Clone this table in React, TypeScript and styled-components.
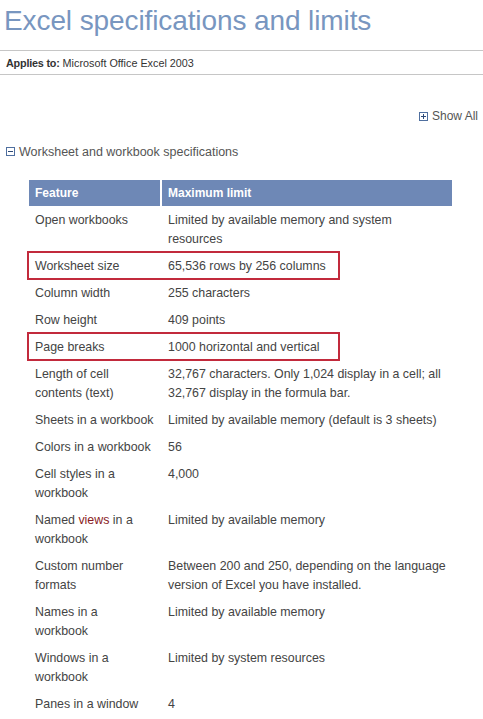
import React from 'react'
import styled, { createGlobalStyle } from 'styled-components'

const GlobalStyle = createGlobalStyle`
  html, body {
    margin: 0;
    padding: 0;
    background: #ffffff;
  }
  body {
    font-family: 'Liberation Sans', Arial, sans-serif;
    color: #444444;
  }
`

const TermLink = styled.span`
  color: #8a1c24;
`

interface Spec {
  feature: React.ReactNode
  limit: string
  highlight?: boolean
}

// line breaks follow the wrapping of the original page
const SPECS: Spec[] = [
  { feature: 'Open workbooks', limit: 'Limited by available memory and system\nresources' },
  { feature: 'Worksheet size', limit: '65,536 rows by 256 columns', highlight: true },
  { feature: 'Column width', limit: '255 characters' },
  { feature: 'Row height', limit: '409 points' },
  { feature: 'Page breaks', limit: '1000 horizontal and vertical', highlight: true },
  {
    feature: 'Length of cell\ncontents (text)',
    limit: '32,767 characters. Only 1,024 display in a cell; all\n32,767 display in the formula bar.',
  },
  { feature: 'Sheets in a workbook', limit: 'Limited by available memory (default is 3 sheets)' },
  { feature: 'Colors in a workbook', limit: '56' },
  { feature: 'Cell styles in a\nworkbook', limit: '4,000' },
  {
    feature: (
      <>
        Named <TermLink>views</TermLink> in a{'\n'}workbook
      </>
    ),
    limit: 'Limited by available memory',
  },
  {
    feature: 'Custom number\nformats',
    limit: 'Between 200 and 250, depending on the language\nversion of Excel you have installed.',
  },
  { feature: 'Names in a\nworkbook', limit: 'Limited by available memory' },
  { feature: 'Windows in a\nworkbook', limit: 'Limited by system resources' },
  { feature: 'Panes in a window', limit: '4' },
]

const Page = styled.div`
  width: 483px;
  padding-top: 4px;
`

const Title = styled.h1`
  margin: 0;
  padding-left: 4px;
  font-family: 'Liberation Sans', Arial, sans-serif;
  font-size: 28px;
  font-weight: normal;
  line-height: 34px;
  letter-spacing: -0.1px;
  color: #7896c0;
`

const AppliesBar = styled.div`
  margin-top: 12px;
  height: 23px;
  border-top: 1px solid #c6c6c6;
  border-bottom: 1px solid #c6c6c6;
  display: flex;
  align-items: center;
  padding-left: 6px;
  font-family: 'Liberation Sans', Tahoma, sans-serif;
  font-size: 10.8px;
  color: #333333;
`

const AppliesLabel = styled.b`
  margin-right: 3px;
  letter-spacing: -0.2px;
`

const ShowAllRow = styled.div`
  display: flex;
  justify-content: flex-end;
  margin-top: 34px;
  padding-right: 5px;
`

const Toggle = styled.span<{ $size?: number }>`
  display: inline-flex;
  align-items: center;
  gap: 4px;
  font-size: ${(p) => p.$size ?? 12}px;
  line-height: 14px;
  color: #555555;
`

const SectionHeading = styled.div`
  margin-top: 19px;
  padding-left: 6px;
`

const SpecTable = styled.div`
  margin: 20px 0 0 29px;
  width: 423px;
  font-size: 12.4px;
  color: #444444;
`

const HeaderRow = styled.div`
  display: grid;
  grid-template-columns: 131px 1fr;
  gap: 2px;
  height: 26px;
  font-size: 12px;
`

const HeaderCell = styled.div`
  background: #6e88b6;
  color: #ffffff;
  font-weight: bold;
  display: flex;
  align-items: center;
  padding-left: 6px;
`

const Row = styled.div`
  position: relative;
  display: grid;
  grid-template-columns: 133px 1fr;
  padding: 5px 0 3px;
  line-height: 19px;
`

const Cell = styled.div`
  padding: 0 6px;
  white-space: pre-line;
`

const Highlight = styled.span`
  position: absolute;
  left: -2px;
  top: -1px;
  width: 313px;
  height: 29px;
  box-sizing: border-box;
  border: 2px solid #c22a3c;
  pointer-events: none;
`

function BoxIcon({ expanded }: { expanded: boolean }) {
  return (
    <svg width="9" height="9" viewBox="0 0 9 9">
      <rect x="0.5" y="0.5" width="8" height="8" fill="#ffffff" stroke="#4f6f9f" />
      <path d="M2 4.5h5" stroke="#2d4a78" strokeWidth="1" />
      {!expanded && <path d="M4.5 2v5" stroke="#2d4a78" strokeWidth="1" />}
    </svg>
  )
}

export default function App() {
  return (
    <Page>
      <GlobalStyle />
      <Title>Excel specifications and limits</Title>
      <AppliesBar>
        <AppliesLabel>Applies to:</AppliesLabel>Microsoft Office Excel 2003
      </AppliesBar>
      <ShowAllRow>
        <Toggle>
          <BoxIcon expanded={false} />
          Show All
        </Toggle>
      </ShowAllRow>
      <SectionHeading>
        <Toggle $size={12.5}>
          <BoxIcon expanded />
          Worksheet and workbook specifications
        </Toggle>
      </SectionHeading>
      <SpecTable>
        <HeaderRow>
          <HeaderCell>Feature</HeaderCell>
          <HeaderCell>Maximum limit</HeaderCell>
        </HeaderRow>
        {SPECS.map((spec, i) => (
          <Row key={i}>
            {spec.highlight && <Highlight />}
            <Cell>{spec.feature}</Cell>
            <Cell>{spec.limit}</Cell>
          </Row>
        ))}
      </SpecTable>
    </Page>
  )
}
